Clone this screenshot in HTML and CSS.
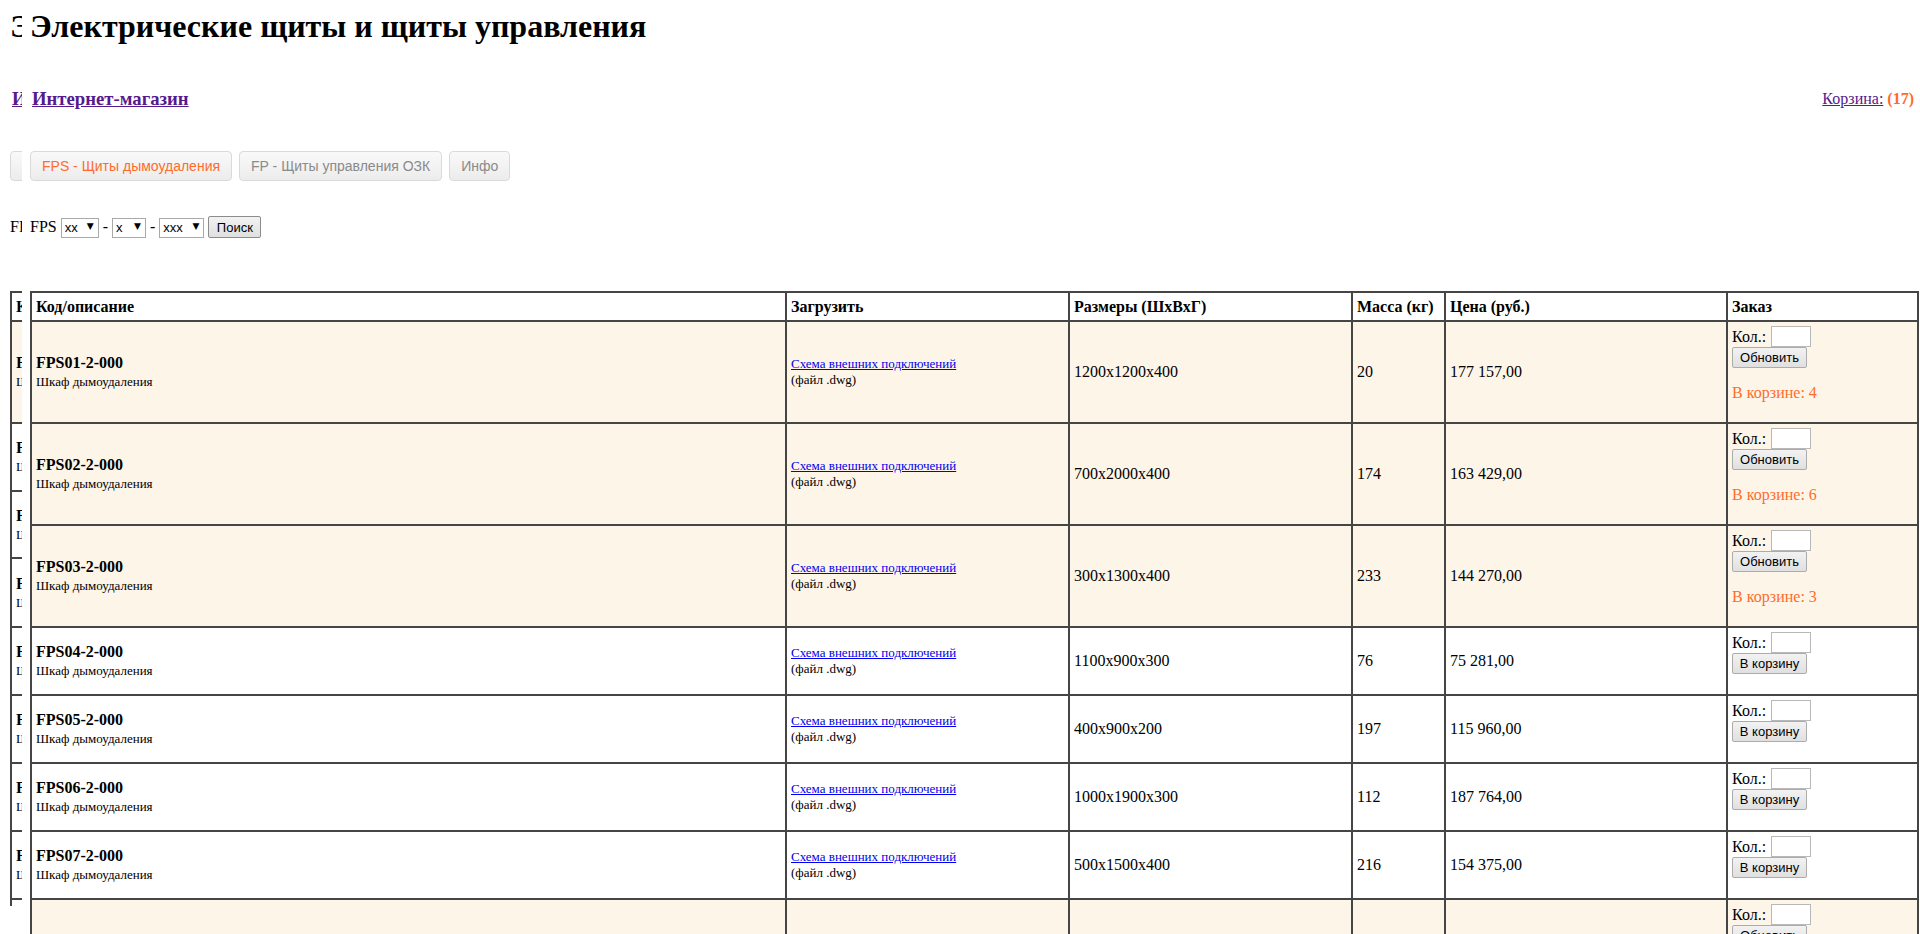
FILE: index.html
```html
<!DOCTYPE html>
<html lang="ru">
<head>
<meta charset="utf-8">
<title>Электрические щиты и щиты управления</title>
<link rel="stylesheet" href="styles.css">
</head>
<body>
<div class="page">
  <div class="ghost">
    <div class="sheet">
      <h1 class="title">Электрические щиты и щиты управления</h1>
      <div class="nav"><a class="shop-link" href="#">Интернет-магазин</a></div>
      <div class="tabs"><span class="tab tab-active">FPS - Щиты дымоудаления</span></div>
      <div class="search">FPS</div>
      <table class="grid ghost-grid">
        <tr class="head"><th>Код/описание</th></tr>
        <tr class="tall cart"><td class="code"><b class="code-name">FPS01-2-000</b><br><span class="code-desc">Шкаф дымоудаления</span></td></tr>
        <tr class="g68"><td class="code"><b class="code-name">FPS02-2-000</b><br><span class="code-desc">Шкаф дымоудаления</span></td></tr>
        <tr class="g67"><td class="code"><b class="code-name">FPS03-2-000</b><br><span class="code-desc">Шкаф дымоудаления</span></td></tr>
        <tr class="g69"><td class="code"><b class="code-name">FPS04-2-000</b><br><span class="code-desc">Шкаф дымоудаления</span></td></tr>
        <tr class="g68"><td class="code"><b class="code-name">FPS05-2-000</b><br><span class="code-desc">Шкаф дымоудаления</span></td></tr>
        <tr class="g68"><td class="code"><b class="code-name">FPS06-2-000</b><br><span class="code-desc">Шкаф дымоудаления</span></td></tr>
        <tr class="g68"><td class="code"><b class="code-name">FPS07-2-000</b><br><span class="code-desc">Шкаф дымоудаления</span></td></tr>
        <tr class="g68"><td class="code"><b class="code-name">FPS08-2-000</b><br><span class="code-desc">Шкаф дымоудаления</span></td></tr>
        <tr class="g68"><td class="code"><b class="code-name">FPS09-2-000</b><br><span class="code-desc">Шкаф дымоудаления</span></td></tr>
      </table>
    </div>
  </div>

  <div class="sheet main">
    <h1 class="title">Электрические щиты и щиты управления</h1>
    <div class="nav">
      <a class="shop-link" href="#">Интернет-магазин</a>
      <span class="cart-info"><a class="cart-link" href="#">Корзина:</a> <b class="cart-count">(17)</b></span>
    </div>
    <div class="tabs">
      <span class="tab tab-active">FPS - Щиты дымоудаления</span>
      <span class="tab">FP - Щиты управления ОЗК</span>
      <span class="tab">Инфо</span>
    </div>
    <div class="search">FPS <span class="sel sel-a"><select><option>xx</option></select></span> - <span class="sel sel-b"><select><option>x</option></select></span> - <span class="sel sel-c"><select><option>xxx</option></select></span> <button class="btn btn-search" type="button">Поиск</button></div>

    <table class="grid">
      <colgroup>
        <col class="c-code"><col class="c-file"><col class="c-size"><col class="c-mass"><col class="c-price"><col class="c-order">
      </colgroup>
      <tr class="head">
        <th>Код/описание</th><th>Загрузить</th><th>Размеры (ШхВхГ)</th><th>Масса (кг)</th><th>Цена (руб.)</th><th>Заказ</th>
      </tr>
      <tr class="tall cart">
        <td class="code"><b class="code-name">FPS01-2-000</b><br><span class="code-desc">Шкаф дымоудаления</span></td>
        <td class="file"><a href="#">Схема внешних подключений</a><br>(файл .dwg)</td>
        <td>1200x1200x400</td><td>20</td><td>177 157,00</td>
        <td class="order"><form class="order-form"><div class="qty">Кол.:<input class="qty-input" type="text"></div><button class="btn" type="button">Обновить</button></form><div class="in-cart">В корзине: 4</div></td>
      </tr>
      <tr class="tall cart">
        <td class="code"><b class="code-name">FPS02-2-000</b><br><span class="code-desc">Шкаф дымоудаления</span></td>
        <td class="file"><a href="#">Схема внешних подключений</a><br>(файл .dwg)</td>
        <td>700x2000x400</td><td>174</td><td>163 429,00</td>
        <td class="order"><form class="order-form"><div class="qty">Кол.:<input class="qty-input" type="text"></div><button class="btn" type="button">Обновить</button></form><div class="in-cart">В корзине: 6</div></td>
      </tr>
      <tr class="tall cart">
        <td class="code"><b class="code-name">FPS03-2-000</b><br><span class="code-desc">Шкаф дымоудаления</span></td>
        <td class="file"><a href="#">Схема внешних подключений</a><br>(файл .dwg)</td>
        <td>300x1300x400</td><td>233</td><td>144 270,00</td>
        <td class="order"><form class="order-form"><div class="qty">Кол.:<input class="qty-input" type="text"></div><button class="btn" type="button">Обновить</button></form><div class="in-cart">В корзине: 3</div></td>
      </tr>
      <tr class="short">
        <td class="code"><b class="code-name">FPS04-2-000</b><br><span class="code-desc">Шкаф дымоудаления</span></td>
        <td class="file"><a href="#">Схема внешних подключений</a><br>(файл .dwg)</td>
        <td>1100x900x300</td><td>76</td><td>75 281,00</td>
        <td class="order"><form class="order-form"><div class="qty">Кол.:<input class="qty-input" type="text"></div><button class="btn" type="button">В корзину</button></form></td>
      </tr>
      <tr class="short">
        <td class="code"><b class="code-name">FPS05-2-000</b><br><span class="code-desc">Шкаф дымоудаления</span></td>
        <td class="file"><a href="#">Схема внешних подключений</a><br>(файл .dwg)</td>
        <td>400x900x200</td><td>197</td><td>115 960,00</td>
        <td class="order"><form class="order-form"><div class="qty">Кол.:<input class="qty-input" type="text"></div><button class="btn" type="button">В корзину</button></form></td>
      </tr>
      <tr class="short">
        <td class="code"><b class="code-name">FPS06-2-000</b><br><span class="code-desc">Шкаф дымоудаления</span></td>
        <td class="file"><a href="#">Схема внешних подключений</a><br>(файл .dwg)</td>
        <td>1000x1900x300</td><td>112</td><td>187 764,00</td>
        <td class="order"><form class="order-form"><div class="qty">Кол.:<input class="qty-input" type="text"></div><button class="btn" type="button">В корзину</button></form></td>
      </tr>
      <tr class="short">
        <td class="code"><b class="code-name">FPS07-2-000</b><br><span class="code-desc">Шкаф дымоудаления</span></td>
        <td class="file"><a href="#">Схема внешних подключений</a><br>(файл .dwg)</td>
        <td>500x1500x400</td><td>216</td><td>154 375,00</td>
        <td class="order"><form class="order-form"><div class="qty">Кол.:<input class="qty-input" type="text"></div><button class="btn" type="button">В корзину</button></form></td>
      </tr>
      <tr class="tall cart">
        <td class="code"><b class="code-name">FPS08-2-000</b><br><span class="code-desc">Шкаф дымоудаления</span></td>
        <td class="file"><a href="#">Схема внешних подключений</a><br>(файл .dwg)</td>
        <td>600x1000x300</td><td>58</td><td>98 112,00</td>
        <td class="order"><form class="order-form"><div class="qty">Кол.:<input class="qty-input" type="text"></div><button class="btn" type="button">Обновить</button></form><div class="in-cart">В корзине: 4</div></td>
      </tr>
    </table>
  </div>
</div>
</body>
</html>
```

FILE: styles.css
```css
html, body {
  margin: 0;
  padding: 0;
  overflow: hidden;
  background: #ffffff;
}

body {
  font-family: "Liberation Serif", "Times New Roman", serif;
  font-size: 16px;
  color: #000;
}

.page {
  display: flex;
  align-items: flex-start;
  padding-left: 10px;
}

.ghost {
  flex: none;
  width: 12px;
  height: 906px;
  overflow: hidden;
}

.sheet {
  flex: none;
  width: 1888px;
  padding-top: 8px;
}

.main {
  margin-left: 8px;
}

.title {
  margin: 0;
  font-size: 32px;
  line-height: 37px;
  font-weight: bold;
}

.nav {
  margin-top: 44px;
  height: 20px;
  line-height: 20px;
  display: flex;
  justify-content: space-between;
  align-items: center;
  padding-right: 4px;
  padding-left: 2px;
}

.shop-link {
  color: #551a8b;
  font-weight: bold;
  font-size: 18.72px;
}

.cart-info {
  font-size: 16px;
}

.cart-link {
  color: #551a8b;
}

.cart-count {
  color: #ff6c2a;
}

.tabs {
  margin-top: 42px;
  display: flex;
  gap: 7px;
  height: 30px;
}

.tab {
  box-sizing: border-box;
  height: 30px;
  line-height: 28px;
  padding: 0 11px;
  border: 1px solid #dadada;
  border-radius: 4px;
  background: linear-gradient(#f9f9f9, #ececec);
  font-family: "Liberation Sans", Arial, sans-serif;
  font-size: 14px;
  color: #8a8a8a;
  white-space: nowrap;
}

.tab-active {
  color: #ff6c2a;
}

.search {
  margin-top: 36px;
  height: 20px;
  line-height: 20px;
  white-space: nowrap;
}

.sel {
  position: relative;
  display: inline-block;
  vertical-align: top;
}

.sel select {
  -webkit-appearance: none;
  appearance: none;
  box-sizing: border-box;
  height: 20px;
  margin: 0;
  padding: 0 0 0 3px;
  border: 1px solid #a9a9a9;
  border-radius: 0;
  background: #fff;
  font-family: "Liberation Sans", Arial, sans-serif;
  font-size: 13px;
  color: #000;
}

.sel::after {
  content: "\25BC";
  position: absolute;
  right: 5px;
  top: 0;
  line-height: 19px;
  font-family: "DejaVu Sans", sans-serif;
  font-size: 9px;
  color: #000;
  pointer-events: none;
}

.sel-a select { width: 38px; }
.sel-b select { width: 34px; }
.sel-c select { width: 45px; }

.btn {
  box-sizing: border-box;
  height: 21px;
  margin: 0;
  padding: 0 6px;
  border: 1px solid #acacac;
  border-radius: 2px;
  background: linear-gradient(#f2f2f2, #e0e0e0);
  font-family: "Liberation Sans", Arial, sans-serif;
  font-size: 13px;
  color: #000;
  vertical-align: top;
}

.btn-search {
  height: 22px;
  width: 53px;
  margin-top: -1px;
  border-color: #8c8c8c;
}

.grid {
  margin-top: 54px;
  width: 1887px;
  table-layout: fixed;
  border-collapse: collapse;
  border: 2px solid #454545;
}

.ghost-grid {
  width: 756px;
}

.grid th,
.grid td {
  border: 2px solid #454545;
  padding: 3px 4px;
  text-align: left;
  vertical-align: middle;
  font-size: 16px;
  line-height: 18px;
}

.c-code { width: 755px; }
.c-file { width: 283px; }
.c-size { width: 283px; }
.c-mass { width: 93px; }
.c-price { width: 282px; }
.c-order { width: 191px; }

.head { height: 29px; }
.tall { height: 102px; }
.short { height: 68px; }
.g67 { height: 67px; }
.g68 { height: 68px; }
.g69 { height: 69px; }

.cart td {
  background: #fef5e9;
}

.code-name {
  font-size: 16px;
}

.code-desc {
  font-size: 13px;
  line-height: 15px;
}

.grid td.file {
  font-size: 13px;
  line-height: 16px;
}

.file a {
  color: #0000ee;
}

.grid td.order {
  vertical-align: top;
  padding-top: 4px;
}

.order-form {
  margin: 0 0 16px 0;
}

.qty {
  display: flex;
  align-items: center;
  height: 21px;
  gap: 5px;
}

.qty-input {
  box-sizing: border-box;
  width: 40px;
  height: 21px;
  margin: 0;
  padding: 0 2px;
  border: 1px solid #b8b8b8;
  background: #fff;
}

.order .btn {
  width: 75px;
  display: block;
}

.in-cart {
  color: #ff6c2a;
  font-size: 16px;
  line-height: 18px;
}
```
